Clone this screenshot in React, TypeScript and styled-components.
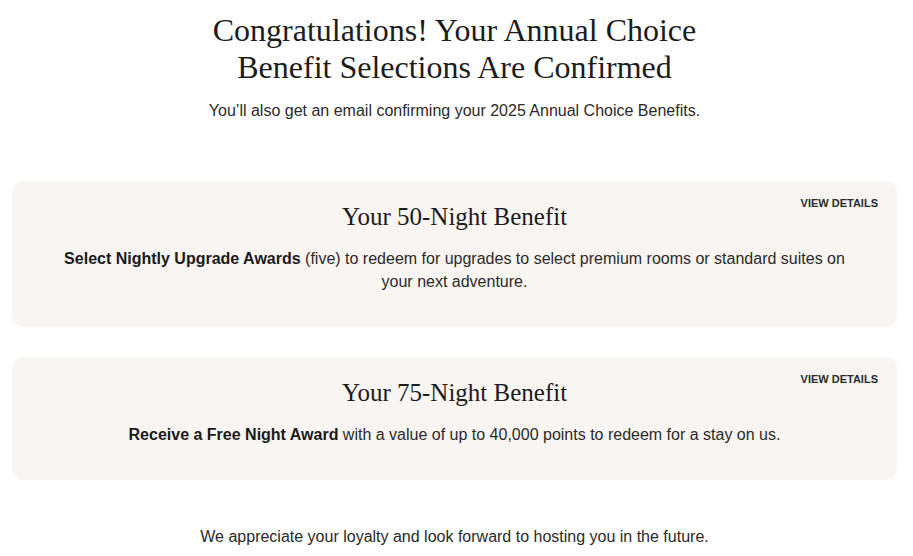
import styled, { createGlobalStyle } from 'styled-components';

const GlobalStyle = createGlobalStyle`
  body {
    margin: 0;
    background: #ffffff;
    color: #1f1f1f;
    font-family: 'Liberation Sans', Arial, sans-serif;
  }
`;

const Page = styled.main`
  padding: 12px 16px 0 12px;
  display: flex;
  flex-direction: column;
  align-items: stretch;
`;

const Heading = styled.h1`
  margin: 0;
  font-family: 'Liberation Serif', 'Times New Roman', serif;
  font-weight: 400;
  font-size: 32px;
  line-height: 37px;
  text-align: center;
  color: #1c1c1c;
`;

const Lead = styled.p`
  margin: 14px 0 0;
  font-size: 16px;
  line-height: 22px;
  text-align: center;
  color: #2a2a2a;
`;

const Cards = styled.section`
  display: flex;
  flex-direction: column;
  gap: 30px;
  margin-top: 59px;
`;

const Card = styled.article`
  position: relative;
  background: #f8f5f2;
  border-radius: 12px;
  padding: 21px 40px 34px;
  text-align: center;
`;

const DetailsLink = styled.a`
  position: absolute;
  top: 16px;
  right: 19px;
  font-size: 11px;
  font-weight: 700;
  color: #2a2a2a;
  text-decoration: none;
  cursor: pointer;
`;

const CardTitle = styled.h2`
  margin: 0;
  font-family: 'Liberation Serif', 'Times New Roman', serif;
  font-weight: 400;
  font-size: 25px;
  line-height: 30px;
  color: #1c1c1c;
`;

const CardText = styled.p`
  margin: 15px 0 0;
  font-size: 16px;
  line-height: 23px;
  color: #2a2a2a;
  b {
    font-weight: 700;
    color: #1a1a1a;
  }
`;

const Closing = styled.p`
  margin: 46px 0 0;
  font-size: 16px;
  line-height: 22px;
  text-align: center;
  color: #2a2a2a;
`;

interface IBenefit {
  nights: number;
  highlight: string;
  rest: string;
}

const benefits: IBenefit[] = [
  {
    nights: 50,
    highlight: 'Select Nightly Upgrade Awards',
    rest: ' (five) to redeem for upgrades to select premium rooms or standard suites on your next adventure.',
  },
  {
    nights: 75,
    highlight: 'Receive a Free Night Award',
    rest: ' with a value of up to 40,000 points to redeem for a stay on us.',
  },
];

export default function App() {
  return (
    <>
      <GlobalStyle />
      <Page>
        <Heading>
          Congratulations! Your Annual Choice
          <br />
          Benefit Selections Are Confirmed
        </Heading>
        <Lead>You’ll also get an email confirming your 2025 Annual Choice Benefits.</Lead>
        <Cards>
          {benefits.map((benefit) => (
            <Card key={benefit.nights}>
              <DetailsLink>VIEW DETAILS</DetailsLink>
              <CardTitle>Your {benefit.nights}-Night Benefit</CardTitle>
              <CardText>
                <b>{benefit.highlight}</b>
                {benefit.rest}
              </CardText>
            </Card>
          ))}
        </Cards>
        <Closing>We appreciate your loyalty and look forward to hosting you in the future.</Closing>
      </Page>
    </>
  );
}
